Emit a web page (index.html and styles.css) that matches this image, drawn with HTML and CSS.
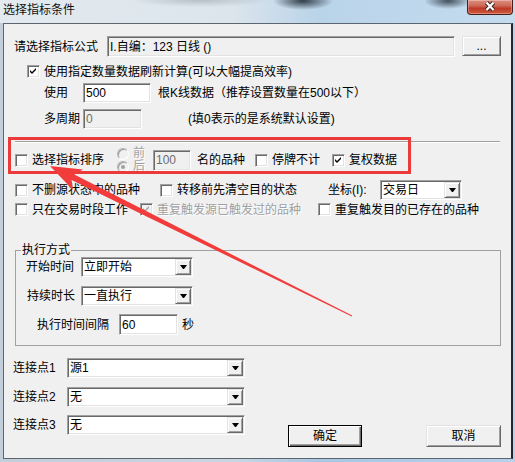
FILE: index.html
```html
<!DOCTYPE html>
<html lang="zh-CN">
<head>
<meta charset="utf-8">
<title>选择指标条件</title>
<link rel="stylesheet" href="styles.css">
</head>
<body>
<div class="window">
  <div class="titlebar">
    <span class="title">选择指标条件</span>
    <div class="close">
      <svg width="14" height="11" viewBox="0 0 14 11"><path d="M3.5 1.5L10.5 9M10.5 1.5L3.5 9" stroke="#3b2520" stroke-width="4.2" fill="none"/><path d="M3.5 1.5L10.5 9M10.5 1.5L3.5 9" stroke="#fff" stroke-width="2.3" fill="none"/></svg>
    </div>
  </div>
  <div class="client">
    <div class="row r-formula">
      <span class="lbl-formula">请选择指标公式</span>
      <div class="edit ro w348">I.自编：123 日线 ()</div>
      <div class="btn dots">...</div>
    </div>

    <div class="row r-usecheck">
      <span class="cb"><svg width="9" height="9" viewBox="0 0 9 9"><polygon points="1,3 3,5 7,1 7,3 3,7 1,5" fill="#000"/></svg></span>
      <span>使用指定数量数据刷新计算(可以大幅提高效率)</span>
    </div>

    <div class="row r-use">
      <span class="lbl-39">使用</span>
      <div class="edit w68">500</div>
      <span class="note-use">根K线数据（推荐设置数量在500以下）</span>
    </div>

    <div class="row r-multi">
      <span class="lbl-39">多周期</span>
      <div class="edit off w59">0</div>
      <span class="note-multi">(填0表示的是系统默认设置)</span>
    </div>

    <div class="sep"></div>

    <div class="row r-sort">
      <span class="cb"></span>
      <span>选择指标排序</span>
      <div class="radios">
        <div class="ri"><span class="rb"></span><span class="dis">前</span></div>
        <div class="ri"><span class="rb on"></span><span class="dis">后</span></div>
      </div>
      <div class="edit off w38">100</div>
      <span class="kind">名的品种</span>
      <span class="cb cb-halt"></span>
      <span>停牌不计</span>
      <span class="cb cb-adj"><svg width="9" height="9" viewBox="0 0 9 9"><polygon points="1,3 3,5 7,1 7,3 3,7 1,5" fill="#000"/></svg></span>
      <span>复权数据</span>
    </div>

    <div class="row r-opts1">
      <span class="cb"></span>
      <span>不删源状态中的品种</span>
      <span class="cb cb-clear"></span>
      <span>转移前先清空目的状态</span>
      <span class="coord-lbl">坐标(I):</span>
      <div class="combo w82"><span class="combo-text">交易日</span><span class="combo-btn"></span></div>
    </div>

    <div class="row r-opts2">
      <span class="cb"></span>
      <span>只在交易时段工作</span>
      <span class="cb off cb-src"><svg width="9" height="9" viewBox="0 0 9 9"><polygon points="1,3 3,5 7,1 7,3 3,7 1,5" fill="#a0a0a0"/></svg></span>
      <span class="dis">重复触发源已触发过的品种</span>
      <span class="cb cb-dst"></span>
      <span>重复触发目的已存在的品种</span>
    </div>

    <div class="group">
      <span class="group-title">执行方式</span>
      <div class="row g-row">
        <span class="lbl-55">开始时间</span>
        <div class="combo w112"><span class="combo-text">立即开始</span><span class="combo-btn"></span></div>
      </div>
      <div class="row g-row g-second">
        <span class="lbl-55 nudge">持续时长</span>
        <div class="combo w112"><span class="combo-text">一直执行</span><span class="combo-btn"></span></div>
      </div>
      <div class="row g-row g-third">
        <span class="lbl-82">执行时间间隔</span>
        <div class="edit w59">60</div>
        <span class="sec">秒</span>
      </div>
    </div>

    <div class="bottom">
      <div class="conn">
        <div class="row conn-row">
          <span class="lbl-54">连接点1</span>
          <div class="combo w178"><span class="combo-text">源1</span><span class="combo-btn"></span></div>
        </div>
        <div class="row conn-row conn-2">
          <span class="lbl-54">连接点2</span>
          <div class="combo w178"><span class="combo-text">无</span><span class="combo-btn"></span></div>
        </div>
        <div class="row conn-row conn-3">
          <span class="lbl-54">连接点3</span>
          <div class="combo w178"><span class="combo-text">无</span><span class="combo-btn"></span></div>
        </div>
      </div>
      <div class="btn def ok">确定</div>
      <div class="btn cancel">取消</div>
    </div>
  </div>
</div>

<div class="mark-box"></div>
<svg class="arrow" width="515" height="462" viewBox="0 0 515 462">
  <polygon points="50,166 83,169.5 74.3,174.6 352.2,315.6 351.8,316.4 71.6,180 73,190" fill="#f23b3b"/>
</svg>
</body>
</html>
```

FILE: styles.css
```css
* { box-sizing: border-box; margin: 0; padding: 0; }

html, body { width: 515px; height: 462px; overflow: hidden; }

body {
  position: relative;
  font-family: "Liberation Sans", "Noto Sans CJK SC", sans-serif;
  font-size: 12px;
  line-height: 14px;
  color: #000;
  white-space: nowrap;
  background: linear-gradient(90deg, #c2cfdb 0%, #c9d6e2 45%, #a9c7e2 62%, #b7d2ea 100%);
}

.window { display: flex; flex-direction: column; height: 462px; }

/* ---------- title bar ---------- */
.titlebar {
  height: 23px;
  flex: none;
  display: flex;
  align-items: flex-start;
  background:
    radial-gradient(ellipse 30px 9px at 303px 1px, rgba(24,34,44,.85), rgba(24,34,44,0)),
    radial-gradient(ellipse 24px 8px at 448px 1px, rgba(24,34,44,.75), rgba(24,34,44,0)),
    radial-gradient(ellipse 70px 7px at 200px 0, rgba(110,120,130,.35), rgba(110,120,130,0)),
    linear-gradient(90deg, #e3eaf0 0%, #dce5ec 45%, #b9d3e9 62%, #c5dcef 100%);
}

.title { padding: 3px 0 0 3px; color: #111; }

.close {
  margin: 0 2px 0 auto;
  width: 46px;
  height: 15px;
  border: 1px solid #4a1e18;
  border-top: none;
  border-radius: 0 0 4px 4px;
  background: linear-gradient(180deg, #dc8e80 0%, #cf6a58 40%, #bd3a28 60%, #cf5a3c 100%);
  box-shadow: inset 0 0 0 1px rgba(255,255,255,.3);
  display: flex;
  justify-content: center;
  align-items: flex-start;
  padding-top: 1px;
}

/* ---------- client ---------- */
.client {
  flex: none;
  height: 436px;
  margin: 0 2px 0 3px;
  border: 1px solid #5b6670;
  border-right: 2px solid #22272c;
  background: #f0f0f0;
  display: flex;
  flex-direction: column;
}

.row { display: flex; align-items: center; flex: none; }

/* controls */
.edit {
  flex: none;
  height: 100%;
  display: flex;
  align-items: center;
  padding-left: 2px;
  overflow: hidden;
  background: #fff;
  border: 1px solid;
  border-color: #a0a0a0 #fff #fff #a0a0a0;
  box-shadow: inset 1px 1px #696969, inset -1px -1px #e3e3e3;
}
.edit.ro { background: #f0f0f0; }
.edit.off { background: #f0f0f0; color: #6d6d6d; }
.w348 { width: 348px; }
.w68 { width: 68px; }
.w59 { width: 59px; }
.w38 { width: 38px; height: 21px; }

.btn {
  flex: none;
  display: flex;
  align-items: center;
  justify-content: center;
  background: #f0f0f0;
  border: 1px solid;
  border-color: #e3e3e3 #696969 #696969 #e3e3e3;
  box-shadow: inset 1px 1px #fff, inset -1px -1px #a0a0a0;
}
.btn.def {
  border-color: #000;
  box-shadow: inset 1px 1px #fff, inset -1px -1px #696969, inset -2px -2px #a0a0a0;
}

.cb {
  flex: none;
  width: 13px;
  height: 13px;
  display: flex;
  align-items: center;
  justify-content: center;
  background: #fff;
  border: 1px solid;
  border-color: #a0a0a0 #fff #fff #a0a0a0;
  box-shadow: inset 1px 1px #696969, inset -1px -1px #e3e3e3;
}
.cb.off { background: #f0f0f0; }
.cb + span { margin-left: 4px; }

.rb {
  flex: none;
  width: 12px;
  height: 12px;
  border-radius: 50%;
  background: #f0f0f0;
  border: 1px solid;
  border-color: #b0b0b0 #fff #fff #b0b0b0;
  box-shadow: inset 1px 1px #a0a0a0;
  display: flex;
  align-items: center;
  justify-content: center;
}
.rb.on::after {
  content: "";
  width: 4px;
  height: 4px;
  border-radius: 50%;
  background: #a0a0a0;
}

.dis { color: #a0a0a0; text-shadow: 1px 1px #fff; }

.combo {
  flex: none;
  height: 20px;
  display: flex;
  padding: 1px;
  background: #fff;
  border: 1px solid;
  border-color: #a0a0a0 #fff #fff #a0a0a0;
  box-shadow: inset 1px 1px #696969, inset -1px -1px #e3e3e3;
}
.combo-text { flex: 1; display: flex; align-items: center; padding-left: 1px; }
.combo-btn {
  width: 16px;
  height: 100%;
  background: #f0f0f0;
  border: 1px solid;
  border-color: #e3e3e3 #696969 #696969 #e3e3e3;
  box-shadow: inset 1px 1px #fff, inset -1px -1px #a0a0a0;
  display: flex;
  align-items: center;
  justify-content: center;
}
.combo-btn::after {
  content: "";
  box-sizing: content-box;
  width: 1px;
  height: 0;
  border-top: 4px solid #000;
  border-left: 3px solid transparent;
  border-right: 3px solid transparent;
}
.w82 { width: 82px; }
.w112 { width: 112px; }
.w178 { width: 178px; }

/* ---------- rows ---------- */
.r-formula { margin-top: 12px; height: 21px; padding-left: 10px; }
.lbl-formula { width: 93px; }
.dots { width: 39px; height: 20px; margin-left: 7px; align-self: flex-start; }

.r-usecheck { margin-top: 8px; height: 13px; padding-left: 23px; }

.r-use { margin-top: 5px; height: 20px; padding-left: 40px; }
.lbl-39 { width: 39px; }
.note-use { margin-left: 7px; }

.r-multi { margin-top: 6px; height: 20px; padding-left: 40px; }
.note-multi { margin-left: 46px; }

.sep {
  flex: none;
  margin: 12px 0 0 11px;
  width: 485px;
  height: 2px;
  border-top: 1px solid #a0a0a0;
  border-bottom: 1px solid #fff;
}

.r-sort { margin-top: 4px; height: 26px; padding-left: 11px; }
.radios { margin-left: 13px; width: 28px; display: flex; flex-direction: column; }
.ri { display: flex; align-items: center; height: 13px; }
.ri .dis { margin-left: 4px; line-height: 13px; }
.r-sort .w38 { margin-left: 8px; }
.kind { margin-left: 6px; }
.cb-halt { margin-left: 10px; }
.cb-adj { margin-left: 12px; }

.r-opts1 { margin-top: 7px; height: 20px; padding-left: 11px; }
.cb-clear { margin-left: 20px; }
.coord-lbl { margin-left: 31px; width: 52px; }

.r-opts2 { margin-top: 3px; height: 13px; padding-left: 11px; }
.cb-src { margin-left: 12px; }
.cb-dst { margin-left: 17px; }

/* group */
.group {
  flex: none;
  margin: 34px 0 0 11px;
  width: 486px;
  border: 1px solid #a0a0a0;
  display: flex;
  flex-direction: column;
  padding: 0 0 10px 10px;
}
.group-title {
  align-self: flex-start;
  margin: -8px 0 0 -5px;
  padding: 0 1px;
  background: #f0f0f0;
}
.g-row { height: 20px; }
.g-second { margin-top: 9px; }
.g-third { margin-top: 8px; height: 21px; padding-left: 11px; }
.lbl-55 { width: 55px; }
.nudge { padding-left: 1px; }
.lbl-82 { width: 82px; }
.sec { margin-left: 4px; }

/* bottom */
.bottom { flex: none; display: flex; align-items: flex-end; margin: 12px 0 0 9px; }
.conn { display: flex; flex-direction: column; padding-bottom: 12px; }
.conn-row { height: 20px; }
.conn-2 { margin-top: 9px; }
.conn-3 { margin-top: 8px; }
.lbl-54 { width: 54px; }
.ok { width: 74px; height: 22px; margin-left: 43px; }
.cancel { width: 75px; height: 22px; margin-left: 64px; }

/* ---------- annotation overlay ---------- */
.mark-box {
  position: absolute;
  left: 8px;
  top: 137px;
  width: 403px;
  height: 37px;
  border: 3px solid #ea3a3a;
  pointer-events: none;
}
.arrow { position: absolute; left: 0; top: 0; pointer-events: none; }
```
